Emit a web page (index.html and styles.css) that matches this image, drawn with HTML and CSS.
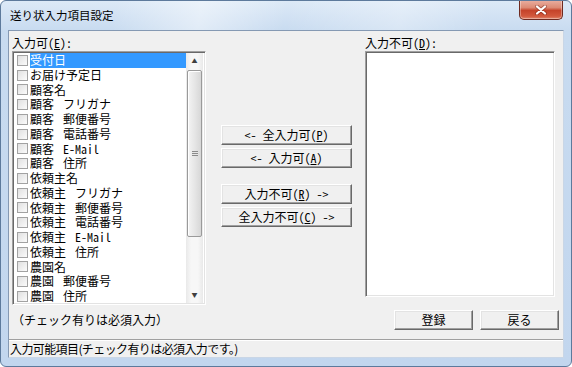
FILE: index.html
```html
<!DOCTYPE html>
<html lang="ja">
<head>
  <meta charset="UTF-8" />
  <title>送り状入力項目設定</title>
  <link rel="stylesheet" href="styles.css">
</head>
<body>
  <div class="window">
    <div class="titlebar">
      <span class="title">送り状入力項目設定</span>
      <button class="close" title="閉じる">
        <svg width="12" height="10" viewBox="0 0 12 10">
          <path d="M2 1.5 L10 8.5 M10 1.5 L2 8.5" stroke="#6b2116" stroke-width="4" stroke-linecap="round" opacity="0.45"/>
          <path d="M2 1.5 L10 8.5 M10 1.5 L2 8.5" stroke="#fff" stroke-width="2.2" stroke-linecap="round"/>
        </svg>
      </button>
    </div>

    <div class="client">
      <div class="panes">
        <div class="col-left">
          <div class="caption">入力可(<u>E</u>):</div>
          <div class="listbox">
            <ul class="items">
              <li class="item selected"><span class="check"></span><span class="text">受付日</span></li>
              <li class="item"><span class="check"></span><span class="text">お届け予定日</span></li>
              <li class="item"><span class="check"></span><span class="text">顧客名</span></li>
              <li class="item"><span class="check"></span><span class="text">顧客 フリガナ</span></li>
              <li class="item"><span class="check"></span><span class="text">顧客 郵便番号</span></li>
              <li class="item"><span class="check"></span><span class="text">顧客 電話番号</span></li>
              <li class="item"><span class="check"></span><span class="text">顧客 E-Mail</span></li>
              <li class="item"><span class="check"></span><span class="text">顧客 住所</span></li>
              <li class="item"><span class="check"></span><span class="text">依頼主名</span></li>
              <li class="item"><span class="check"></span><span class="text">依頼主 フリガナ</span></li>
              <li class="item"><span class="check"></span><span class="text">依頼主 郵便番号</span></li>
              <li class="item"><span class="check"></span><span class="text">依頼主 電話番号</span></li>
              <li class="item"><span class="check"></span><span class="text">依頼主 E-Mail</span></li>
              <li class="item"><span class="check"></span><span class="text">依頼主 住所</span></li>
              <li class="item"><span class="check"></span><span class="text">農園名</span></li>
              <li class="item"><span class="check"></span><span class="text">農園 郵便番号</span></li>
              <li class="item"><span class="check"></span><span class="text">農園 住所</span></li>
            </ul>
            <div class="scrollbar">
              <div class="arrow">▲</div>
              <div class="track">
                <div class="thumb"><span class="grip"></span></div>
              </div>
              <div class="arrow">▼</div>
            </div>
          </div>
          <div class="note">（チェック有りは必須入力）</div>
        </div>

        <div class="col-mid">
          <button class="btn move first">&lt;- 全入力可(<u>P</u>)</button>
          <button class="btn move">&lt;- 入力可(<u>A</u>)</button>
          <button class="btn move group">入力不可(<u>R</u>) -&gt;</button>
          <button class="btn move">全入力不可(<u>C</u>) -&gt;</button>
        </div>

        <div class="col-right">
          <div class="caption">入力不可(<u>D</u>):</div>
          <div class="listbox empty"></div>
          <div class="actions">
            <button class="btn action">登録</button>
            <button class="btn action">戻る</button>
          </div>
        </div>
      </div>

      <div class="status">入力可能項目(チェック有りは必須入力です。)</div>
    </div>
  </div>
</body>
</html>
```

FILE: styles.css
```css
body {
  margin: 0;
  padding: 0;
  background: #fff;
  font-family: "Noto Sans CJK JP", "Noto Sans", sans-serif;
  font-size: 12px;
  color: #000;
}
.window {
  width: 572px;
  height: 367px;
  box-sizing: border-box;
  border: 1px solid #5d7a9c;
  border-radius: 6px;
  background: linear-gradient(to bottom, #dce9f7 0, #c8dbf0 30px, #c2d6ee 100%);
  display: flex;
  flex-direction: column;
  overflow: hidden;
}
.titlebar {
  height: 29px;
  display: flex;
  align-items: flex-start;
  background: linear-gradient(100deg, rgba(255,255,255,0) 20%, rgba(255,255,255,0.45) 35%, rgba(255,255,255,0) 50%, rgba(255,255,255,0.3) 70%, rgba(255,255,255,0) 85%);
}
.title {
  padding: 6px 0 0 9px;
  line-height: 16px;
  font-size: 11.5px;
}
.close {
  margin-left: auto;
  margin-right: 8px;
  margin-top: -1px;
  width: 44px;
  height: 20px;
  padding: 0;
  border: 1px solid #6e2a20;
  border-top: none;
  border-radius: 0 0 5px 5px;
  background: linear-gradient(to bottom, #eab0a2 0%, #dc8a74 40%, #c5432a 55%, #d2583c 85%, #e0866c 100%);
  box-shadow: inset 0 0 0 1px rgba(255,255,255,0.35);
  display: flex;
  align-items: center;
  justify-content: center;
}
.client {
  margin: 0 7px 8px 7px;
  flex: 1;
  background: #f0f0f0;
  border: 1px solid #8599b3;
  border-right-color: #c9d6e6;
  border-bottom-color: #c9d6e6;
  display: flex;
  flex-direction: column;
}
.panes {
  flex: 1;
  display: flex;
  padding: 5px 0 0 3px;
  font-family: "Noto Sans Mono CJK JP", "Noto Sans CJK JP", monospace;
}
.caption {
  height: 15px;
  line-height: 14px;
}
u {
  text-decoration: underline;
}
.listbox {
  box-sizing: border-box;
  background: #fff;
  border: 1px solid;
  border-color: #a0a0a0 #fff #fff #a0a0a0;
  box-shadow: inset 1px 1px 0 #696969, inset -1px -1px 0 #e3e3e3;
  padding: 1px 2px 1px 2px;
}
.col-left {
  width: 194px;
  display: flex;
  flex-direction: column;
}
.col-left .listbox {
  height: 254px;
  display: flex;
  overflow: hidden;
}
.items {
  list-style: none;
  margin: 0;
  padding: 0;
  flex: 1;
  overflow: hidden;
}
.item {
  height: 14.75px;
  display: flex;
  align-items: center;
  white-space: pre;
  line-height: 14px;
}
.check {
  width: 9px;
  height: 9px;
  margin: 0 2px 0 2px;
  border: 1px solid #a2a2a2;
  background: linear-gradient(135deg, #e0e0e0, #fbfbfb);
  flex: none;
}
.text {
  flex: 1;
  height: 14.75px;
  line-height: 14.75px;
  word-spacing: 3px;
}
.selected .text {
  background: #3399ff;
  color: #fff;
}
.scrollbar {
  width: 17px;
  display: flex;
  flex-direction: column;
  background: linear-gradient(to right, #e9e9e9, #f7f7f7 30%, #f7f7f7 70%, #e9e9e9);
}
.arrow {
  height: 16px;
  font-size: 6px;
  line-height: 16px;
  text-align: center;
  color: #404040;
}
.track {
  flex: 1;
  padding: 1px 0;
}
.thumb {
  box-sizing: border-box;
  height: 167px;
  margin: 0 1px;
  border: 1px solid #9a9a9a;
  border-radius: 2px;
  background: linear-gradient(to right, #f4f4f4, #e6e6e6 50%, #d7d7d7);
  box-shadow: inset 1px 1px 0 #fff;
  display: flex;
  align-items: center;
  justify-content: center;
}
.grip {
  width: 6px;
  height: 5px;
  background: repeating-linear-gradient(to bottom, #8a8a8a 0, #8a8a8a 1px, #e6e6e6 1px, #e6e6e6 2px);
}
.note {
  margin-top: 8px;
  line-height: 14px;
}
.col-mid {
  width: 131px;
  margin-left: 15px;
  display: flex;
  flex-direction: column;
}
.btn {
  font-family: inherit;
  font-size: 12px;
  color: #000;
  background: #f0f0f0;
  border: 1px solid;
  border-color: #fff #696969 #696969 #fff;
  box-shadow: inset -1px -1px 0 #a0a0a0, inset 1px 1px 0 #e3e3e3;
  padding: 0;
  white-space: pre;
  line-height: 18px;
}
.move {
  height: 20px;
  margin-top: 3px;
}
.move.first {
  margin-top: 89px;
}
.move.group {
  margin-top: 16px;
}
.col-right {
  width: 194px;
  margin-left: 13px;
  display: flex;
  flex-direction: column;
}
.col-right .listbox {
  width: 190px;
  height: 246px;
}
.actions {
  margin-top: 13px;
  display: flex;
  justify-content: flex-end;
  gap: 7px;
}
.action {
  width: 79px;
  height: 20px;
}
.status {
  height: 17px;
  line-height: 17px;
  padding-left: 1px;
  letter-spacing: -0.6px;
  border-top: 1px solid #a0a0a0;
  box-shadow: inset 0 1px 0 #fff;
}
```
